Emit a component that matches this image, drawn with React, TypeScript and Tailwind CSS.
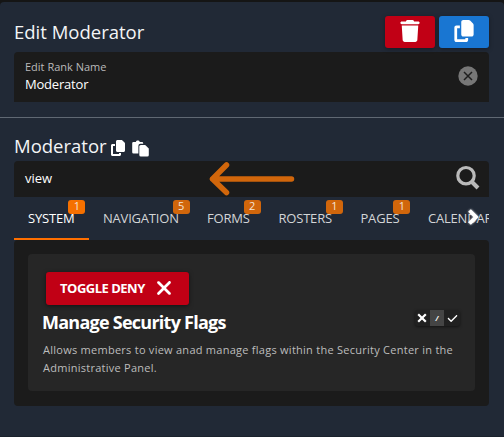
import React from "react";
import { FaCheck, FaCopy, FaTrash, FaXmark } from "react-icons/fa6";

type Tab = { label: string; count?: number; width: string };

const tabs: Tab[] = [
  { label: "SYSTEM", count: 1, width: "w-[75px]" },
  { label: "NAVIGATION", count: 5, width: "w-[104px]" },
  { label: "FORMS", count: 2, width: "w-[71.5px]" },
  { label: "ROSTERS", count: 1, width: "w-[82px]" },
  { label: "PAGES", count: 1, width: "w-[67.5px]" },
  { label: "CALENDAR", width: "w-[92px]" },
];

function TabItem({ tab, active }: { tab: Tab; active: boolean }) {
  return (
    <div
      className={`flex h-[43px] shrink-0 items-center border-b-2 pl-[14px] ${tab.width} ${
        active ? "border-[#ff6f00] text-white" : "border-transparent text-[#d3d5d7]"
      }`}
    >
      <span className="relative whitespace-nowrap text-[13px] leading-[18px] tracking-[-0.2px]">
        {tab.label}
        {tab.count !== undefined && (
          <span
            className={`absolute -right-[11px] -top-[9px] flex h-[14px] w-[17px] items-center justify-center rounded-[3px] pb-[2px] text-[11px] leading-none tracking-normal text-[#f5e4d7] ${
              active ? "bg-[#f57000]" : "bg-[#d1660b]"
            }`}
          >
            {tab.count}
          </span>
        )}
      </span>
    </div>
  );
}

function Arrow() {
  return (
    <svg width="90" height="36" viewBox="0 0 90 36" fill="none" className="absolute left-[194px] top-0">
      <path
        d="M83.5 18H4.5M18.5 4L4.5 18L18.5 31.5"
        stroke="#d1660b"
        strokeWidth="5.5"
        strokeLinecap="round"
        strokeLinejoin="round"
      />
    </svg>
  );
}

function PasteIcon() {
  return (
    <svg width="17" height="17" viewBox="0 0 17 17" fill="white" className="ml-[6px] mt-[2px]">
      <path d="M1.5 2H3.8C4.2 .9 4.9 .5 5.8 .5S7.4 .9 7.8 2H10Q11.2 2 11.2 3.2V3.8H8.4Q6.4 3.8 6.4 5.8V13.5H1.5Q.2 13.5 .2 12.2V3.2Q.2 2 1.5 2Z" />
      <path d="M8.8 5H13.2L16.8 8.5V15Q16.8 16.5 15.3 16.5H8.8Q7.3 16.5 7.3 15V6.5Q7.3 5 8.8 5Z" />
    </svg>
  );
}

export default function App() {
  return (
    <div className="h-[437px] w-[504px] overflow-hidden bg-[#151515] pt-[2px] font-['Open_Sans','Noto_Sans',sans-serif]">
      <div className="h-[435px] rounded-t-[4px] border-b border-[#1b222c] bg-[#212936]">
        <header className="flex h-[50px] items-start justify-between pl-[14px] pr-[15px] pt-[14px]">
          <h1 className="mt-[4px] whitespace-nowrap text-[18.5px] leading-[24px] text-[#f4f5f6]">Edit Moderator</h1>
          <div className="flex gap-1">
            <button className="flex h-8 w-[50px] items-center justify-center rounded-[3px] bg-[#c10015] pb-[3px] text-white shadow-[0_1px_4px_rgba(0,0,0,0.35)]">
              <FaTrash size={22} />
            </button>
            <button className="flex h-8 w-[50px] items-center justify-center rounded-[3px] bg-[#1976d2] pb-[3px] text-white shadow-[0_1px_4px_rgba(0,0,0,0.35)]">
              <FaCopy size={22} />
            </button>
          </div>
        </header>

        <div className="ml-[14px] flex h-[50px] w-[475px] items-center justify-between rounded-t-[4px] bg-[#1b1b1b] pl-[11px] pr-[11px]">
          <div className="-mt-[3px]">
            <div className="text-[11px] leading-[17px] text-[#bababa]">Edit Rank Name</div>
            <div className="text-[13px] leading-[18px] tracking-[-0.2px] text-white">Moderator</div>
          </div>
          <svg width="20" height="20" viewBox="0 0 20 20" className="-mt-[2px]">
            <circle cx="10" cy="10" r="9.7" fill="#777777" />
            <path d="M6 6L14 14M14 6L6 14" stroke="#1f1f1f" strokeWidth="1.5" />
          </svg>
        </div>
        <div className="mt-[15px] h-px bg-[#606873]" />

        <div className="ml-[14px] flex h-[43px] items-center pt-[15px]">
          <h2 className="-mt-[2px] w-[95.5px] whitespace-nowrap text-[18.5px] leading-[24px] text-[#f4f5f6]">Moderator</h2>
          <FaCopy size={16} className="mt-[2px] text-white" />
          <PasteIcon />
        </div>

        <div className="relative ml-[14px] flex h-9 w-[475px] items-center justify-between rounded-t-[4px] bg-[#1b1b1b] pl-[11px] pr-[9px]">
          <span className="-mt-[2px] text-[13px] leading-[18px] text-white">view</span>
          <Arrow />
          <svg width="25" height="25" viewBox="0 0 25 25" fill="none" stroke="#bababa" className="-mt-[3px]">
            <circle cx="11" cy="10.7" r="8.2" strokeWidth="3.2" />
            <path d="M17 17L23 23" strokeWidth="4" />
          </svg>
        </div>

        <nav className="relative ml-[14px] flex w-[475px] overflow-hidden">
          {tabs.map((tab, i) => (
            <TabItem key={tab.label} tab={tab} active={i === 0} />
          ))}
          <svg
            width="16"
            height="22"
            viewBox="0 0 16 22"
            fill="none"
            className="absolute left-[452px] top-[9px] drop-shadow-[0_0_1px_#d4d8dd]"
          >
            <path d="M3.5 4.5L10 11L3.5 17.5" stroke="white" strokeWidth="3.8" />
          </svg>
        </nav>

        <main className="ml-[14px] h-[166px] w-[475px] rounded-[4px] bg-[#1b1b1b] px-[14px] pt-[14px]">
          <section className="flex h-[137px] justify-between rounded-[4px] bg-[#262626] pl-[15px] pr-[15px] pt-[18px]">
            <div className="shrink-0">
              <button className="ml-[3px] flex h-[33px] w-[143px] items-center rounded-[3px] bg-[#c10015] pl-[14px] text-white shadow-[0_1px_4px_rgba(0,0,0,0.5)]">
                <span className="-mt-[2px] w-[93px] whitespace-nowrap text-left text-[13px] font-bold leading-[18px] tracking-[-0.5px]">TOGGLE DENY</span>
                <FaXmark size={22} className="-mt-px" />
              </button>
              <h3 className="-ml-px mt-[5px] whitespace-nowrap text-[18px] font-bold leading-[25px] tracking-[-0.75px] text-white">Manage Security Flags</h3>
              <p className="mt-[6px] w-0 whitespace-nowrap text-[11px] leading-[18px] tracking-[0.26px] text-[#bdbdbd]">
                Allows members to view anad manage flags within the Security Center in the
                <br />
                Administrative Panel.
              </p>
            </div>
            <div className="mt-[38px] flex h-4 w-[45px] items-center rounded-[3px] bg-[#202020] text-white shadow-[0_1px_3px_rgba(0,0,0,0.5)]">
              <span className="flex w-[15px] justify-center pr-px">
                <svg width="10" height="10" viewBox="0 0 10 10" stroke="white" strokeWidth="2.2">
                  <path d="M1.2 1.2L8.8 8.8M8.8 1.2L1.2 8.8" />
                </svg>
              </span>
              <span className="flex h-4 w-[14px] items-center justify-center bg-[#444444] text-[7px] font-bold italic leading-none">/</span>
              <span className="flex w-[16px] justify-center"><FaCheck size={11} /></span>
            </div>
          </section>
        </main>
      </div>
    </div>
  );
}
